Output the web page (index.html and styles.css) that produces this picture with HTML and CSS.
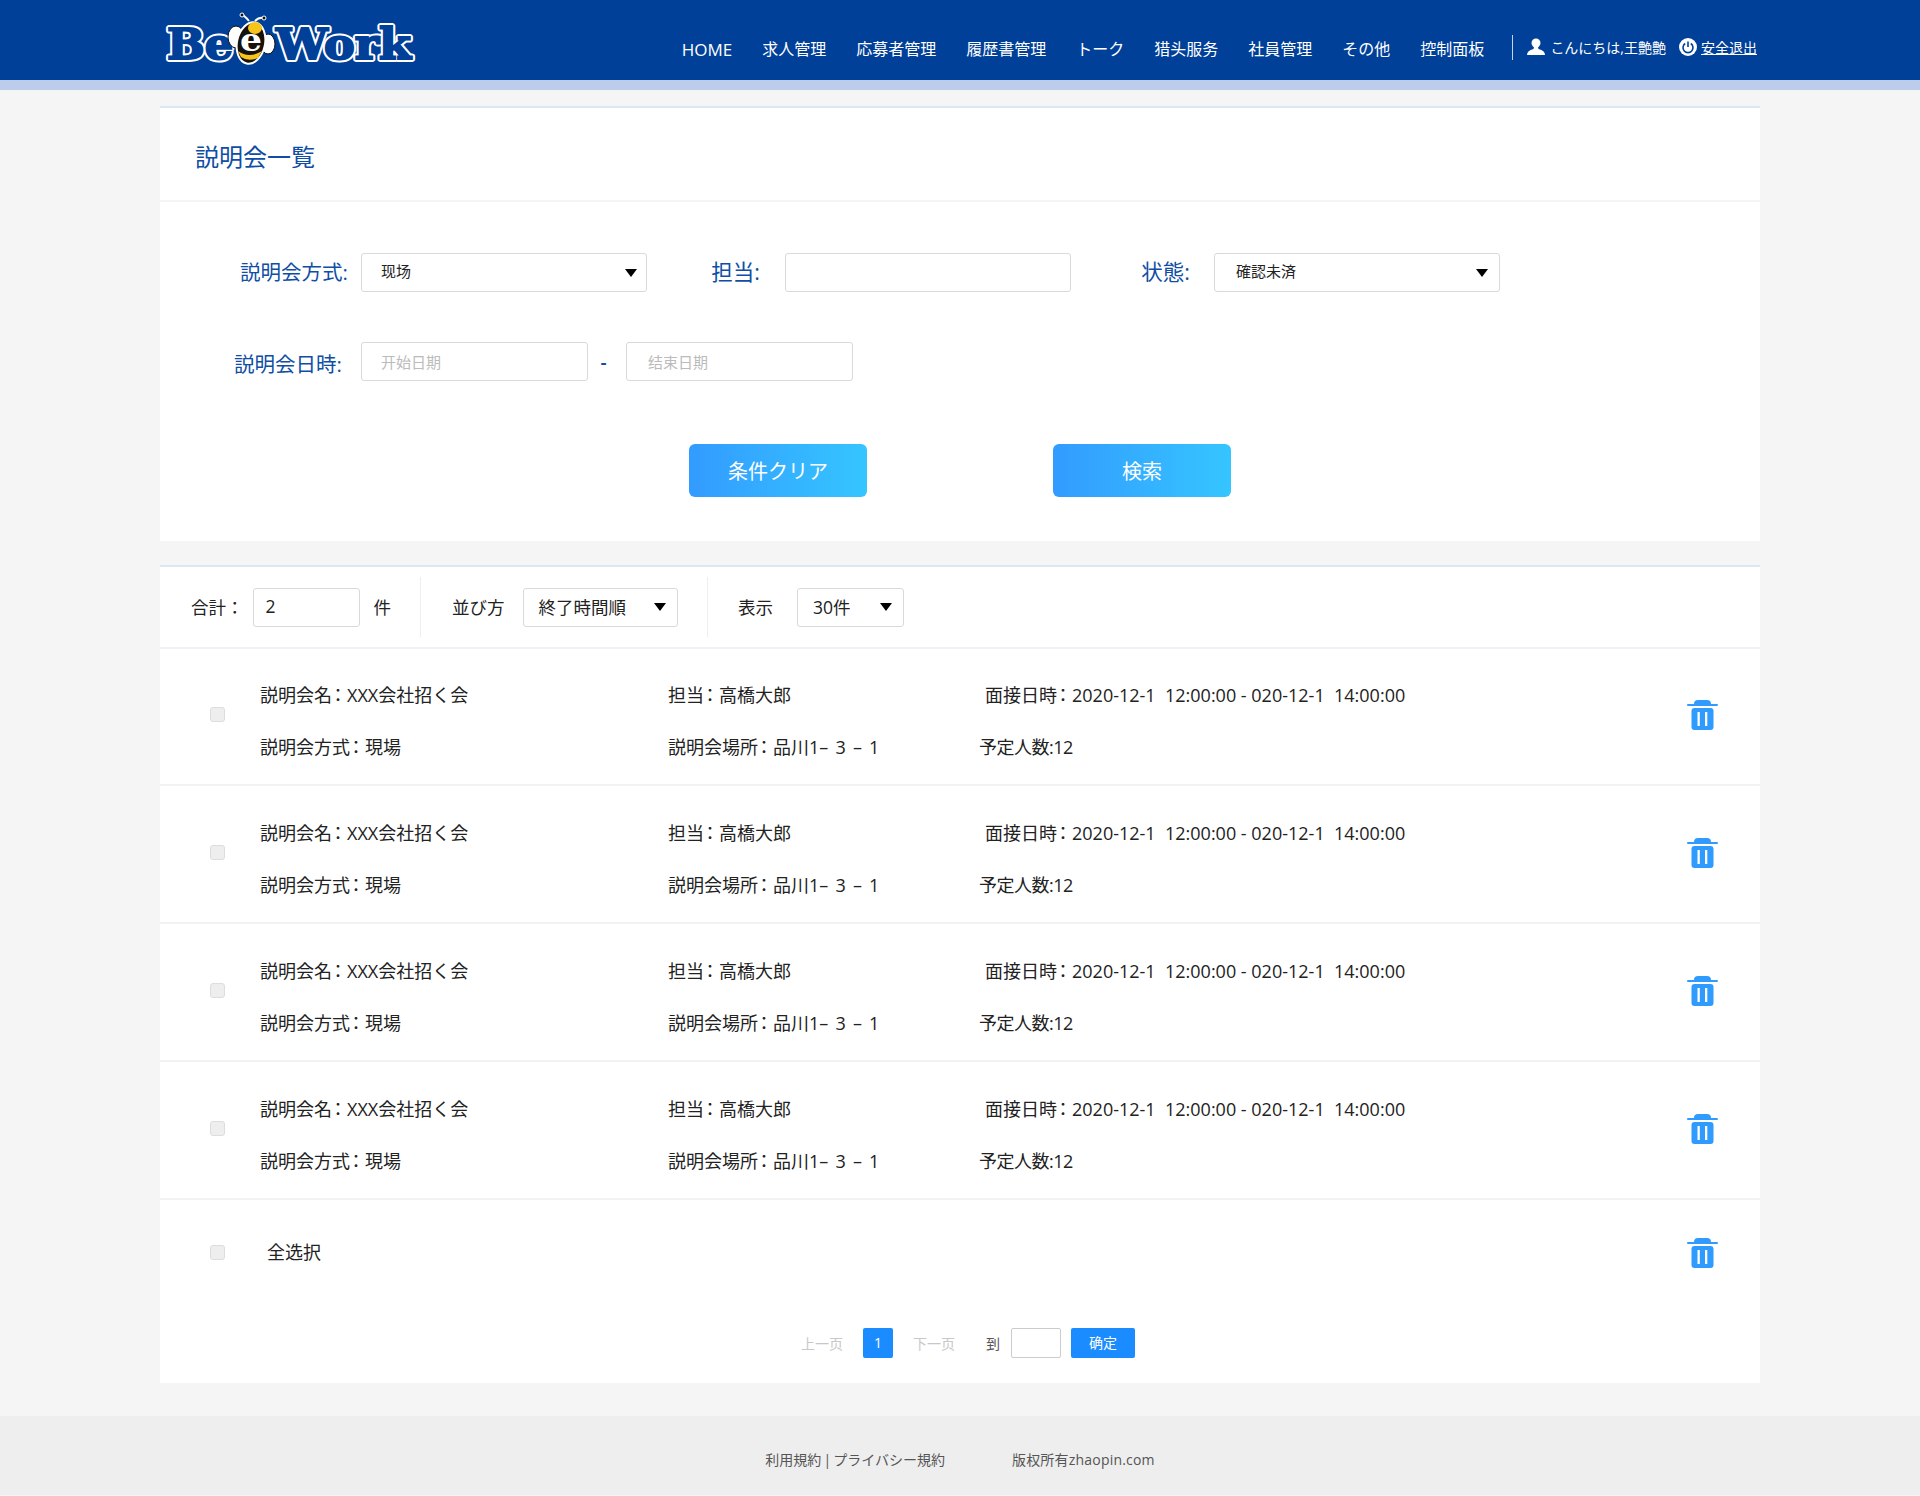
FILE: index.html
```html
<!DOCTYPE html>
<html lang="ja">
  <head>
    <meta charset="UTF-8" />
    <title>説明会一覧</title>
    <link rel="stylesheet" href="styles.css">
  </head>
  <body>
    <header class="top-bar">
      <svg class="logo" width="250" height="54" viewBox="0 0 250 54" role="img" aria-label="BeeWork">
        <text class="logo-line" x="2" y="48" textLength="66" lengthAdjust="spacingAndGlyphs">Be</text>
        <text class="logo-line" x="111" y="48" textLength="135" lengthAdjust="spacingAndGlyphs">Work</text>
        <text class="logo-fill" x="2" y="48" textLength="66" lengthAdjust="spacingAndGlyphs">Be</text>
        <text class="logo-fill" x="111" y="48" textLength="135" lengthAdjust="spacingAndGlyphs">Work</text>
        <path d="M84 10 Q80 5 77 4 M90 10 Q94 6 99 7" fill="none" stroke="#fff" stroke-width="2" />
        <circle cx="77" cy="4" r="2" fill="#111" stroke="#fff" />
        <circle cx="99" cy="7" r="2" fill="#111" stroke="#fff" />
        <ellipse cx="71" cy="26" rx="8" ry="11" fill="#fff" stroke="#111" />
        <ellipse cx="103" cy="33" rx="7" ry="10" fill="#fff" stroke="#111" />
        <ellipse cx="86" cy="32" rx="14" ry="21" fill="#17120c" stroke="#fff" stroke-width="2" transform="rotate(12 86 32)" />
        <ellipse cx="90" cy="17" rx="7" ry="6" fill="#f6c41b" />
        <path d="M73 40 Q84 48 97 40 L93 47 Q83 51 76 46 Z" fill="#f6c41b" />
        <text class="logo-bee" x="75" y="40" textLength="22" lengthAdjust="spacingAndGlyphs">e</text>
      </svg>
      <nav class="main-nav">
        <a href="#" class="nav-home">HOME</a>
        <a href="#">求人管理</a>
        <a href="#">応募者管理</a>
        <a href="#">履歴書管理</a>
        <a href="#">トーク</a>
        <a href="#" class="zh">猎头服务</a>
        <a href="#">社員管理</a>
        <a href="#">その他</a>
        <a href="#" class="zh">控制面板</a>
      </nav>
      <div class="user-box">
        <svg width="18" height="18" viewBox="0 0 18 18">
          <circle cx="9" cy="5" r="4.500" fill="#fff" />
          <path d="M7 9 L11 9 L11.500 11 Q18 12.500 18 17 L0 17 Q0 12.500 6.500 11 Z" fill="#fff" />
        </svg>
        <span class="user-name">こんにちは,王艶艶</span>
        <svg class="power" width="18" height="18" viewBox="0 0 18 18">
          <circle cx="9" cy="9" r="9" fill="#fff" />
          <path d="M6.200 5.500 A5 5 0 1 0 11.800 5.500" fill="none" stroke="#004098" stroke-width="1.600" />
          <path d="M9 3.500 V9" fill="none" stroke="#004098" stroke-width="1.600" />
        </svg>
        <a href="#" class="logout zh">安全退出</a>
      </div>
    </header>
    <div class="top-band"></div>

    <main class="page">
      <section class="card search-card">
        <h1 class="card-title">説明会一覧</h1>
        <form class="search-form">
          <div class="form-row form-row-top">
            <label class="label label-method">説明会方式:</label>
            <div class="field field-wide field-small field-method">
              <span class="zh">现场</span><i class="caret"></i>
            </div>
            <label class="label label-owner">担当:</label>
            <div class="field field-wide"></div>
            <label class="label label-state">状態:</label>
            <div class="field field-wide field-small field-state">
              <span>確認未済</span><i class="caret"></i>
            </div>
          </div>
          <div class="form-row">
            <label class="label label-date">説明会日時:</label>
            <div class="field field-date field-small placeholder zh">开始日期</div>
            <span class="dash">-</span>
            <div class="field field-date field-small field-end placeholder zh">结束日期</div>
          </div>
          <div class="form-buttons">
            <button type="button" class="grad-btn">条件クリア</button>
            <button type="button" class="grad-btn">検索</button>
          </div>
        </form>
      </section>

      <section class="card list-card">
        <div class="toolbar">
          <div class="tool-group tool-total">
            <span>合計：</span>
            <div class="field field-total">2</div>
            <span>件</span>
          </div>
          <div class="tool-group tool-sort">
            <span>並び方</span>
            <div class="field field-sort"><span>終了時間順</span><i class="caret"></i></div>
          </div>
          <div class="tool-group tool-show">
            <span>表示</span>
            <div class="field field-show"><span>30件</span><i class="caret"></i></div>
          </div>
        </div>

        <div class="item">
          <input type="checkbox" class="check" disabled />
          <div class="item-info zh">
            <span>説明会名<b class="sep">：</b>XXX会社招く会</span>
            <span>担当<b class="sep">：</b>高橋大郎</span>
            <span class="item-date">面接日時<b class="sep">：</b>2020-12-1&nbsp; 12:00:00 - 020-12-1&nbsp; 14:00:00</span>
            <span>説明会方式<b class="sep">：</b>現場</span>
            <span class="item-place">説明会場所<b class="sep">：</b>品川1– 3 – 1</span>
            <span class="item-count">予定人数:12</span>
          </div>
          <svg class="trash" width="31" height="30" viewBox="0 0 31 30">
            <path d="M7 4 Q7 0 11 0 H20 Q24 0 24 4 Z" fill="#2f9bff" />
            <rect x="0" y="4" width="31" height="2" rx="1" fill="#2f9bff" />
            <rect x="4.500" y="8" width="22" height="22" rx="3" fill="#2f9bff" />
            <rect x="10.500" y="12" width="2.300" height="14" fill="#fff" />
            <rect x="18" y="12" width="2.300" height="14" fill="#fff" />
          </svg>
        </div>
        <div class="item">
          <input type="checkbox" class="check" disabled />
          <div class="item-info zh">
            <span>説明会名<b class="sep">：</b>XXX会社招く会</span>
            <span>担当<b class="sep">：</b>高橋大郎</span>
            <span class="item-date">面接日時<b class="sep">：</b>2020-12-1&nbsp; 12:00:00 - 020-12-1&nbsp; 14:00:00</span>
            <span>説明会方式<b class="sep">：</b>現場</span>
            <span class="item-place">説明会場所<b class="sep">：</b>品川1– 3 – 1</span>
            <span class="item-count">予定人数:12</span>
          </div>
          <svg class="trash" width="31" height="30" viewBox="0 0 31 30">
            <path d="M7 4 Q7 0 11 0 H20 Q24 0 24 4 Z" fill="#2f9bff" />
            <rect x="0" y="4" width="31" height="2" rx="1" fill="#2f9bff" />
            <rect x="4.500" y="8" width="22" height="22" rx="3" fill="#2f9bff" />
            <rect x="10.500" y="12" width="2.300" height="14" fill="#fff" />
            <rect x="18" y="12" width="2.300" height="14" fill="#fff" />
          </svg>
        </div>
        <div class="item">
          <input type="checkbox" class="check" disabled />
          <div class="item-info zh">
            <span>説明会名<b class="sep">：</b>XXX会社招く会</span>
            <span>担当<b class="sep">：</b>高橋大郎</span>
            <span class="item-date">面接日時<b class="sep">：</b>2020-12-1&nbsp; 12:00:00 - 020-12-1&nbsp; 14:00:00</span>
            <span>説明会方式<b class="sep">：</b>現場</span>
            <span class="item-place">説明会場所<b class="sep">：</b>品川1– 3 – 1</span>
            <span class="item-count">予定人数:12</span>
          </div>
          <svg class="trash" width="31" height="30" viewBox="0 0 31 30">
            <path d="M7 4 Q7 0 11 0 H20 Q24 0 24 4 Z" fill="#2f9bff" />
            <rect x="0" y="4" width="31" height="2" rx="1" fill="#2f9bff" />
            <rect x="4.500" y="8" width="22" height="22" rx="3" fill="#2f9bff" />
            <rect x="10.500" y="12" width="2.300" height="14" fill="#fff" />
            <rect x="18" y="12" width="2.300" height="14" fill="#fff" />
          </svg>
        </div>
        <div class="item">
          <input type="checkbox" class="check" disabled />
          <div class="item-info zh">
            <span>説明会名<b class="sep">：</b>XXX会社招く会</span>
            <span>担当<b class="sep">：</b>高橋大郎</span>
            <span class="item-date">面接日時<b class="sep">：</b>2020-12-1&nbsp; 12:00:00 - 020-12-1&nbsp; 14:00:00</span>
            <span>説明会方式<b class="sep">：</b>現場</span>
            <span class="item-place">説明会場所<b class="sep">：</b>品川1– 3 – 1</span>
            <span class="item-count">予定人数:12</span>
          </div>
          <svg class="trash" width="31" height="30" viewBox="0 0 31 30">
            <path d="M7 4 Q7 0 11 0 H20 Q24 0 24 4 Z" fill="#2f9bff" />
            <rect x="0" y="4" width="31" height="2" rx="1" fill="#2f9bff" />
            <rect x="4.500" y="8" width="22" height="22" rx="3" fill="#2f9bff" />
            <rect x="10.500" y="12" width="2.300" height="14" fill="#fff" />
            <rect x="18" y="12" width="2.300" height="14" fill="#fff" />
          </svg>
        </div>

        <div class="select-all">
          <input type="checkbox" class="check" disabled />
          <span class="select-all-text zh">全选択</span>
          <svg class="trash" width="31" height="30" viewBox="0 0 31 30">
            <path d="M7 4 Q7 0 11 0 H20 Q24 0 24 4 Z" fill="#2f9bff" />
            <rect x="0" y="4" width="31" height="2" rx="1" fill="#2f9bff" />
            <rect x="4.500" y="8" width="22" height="22" rx="3" fill="#2f9bff" />
            <rect x="10.500" y="12" width="2.300" height="14" fill="#fff" />
            <rect x="18" y="12" width="2.300" height="14" fill="#fff" />
          </svg>
        </div>

        <div class="pager zh">
          <span class="pager-off">上一页</span>
          <span class="pager-num">1</span>
          <span class="pager-off">下一页</span>
          <span class="pager-to">到</span>
          <span class="pager-input"></span>
          <span class="pager-ok">确定</span>
        </div>
      </section>
    </main>

    <footer class="site-footer">
      <span class="footer-terms">利用規約 | プライバシー規約</span>
      <span class="footer-copy zh">版权所有zhaopin.com</span>
    </footer>
  </body>
</html>
```

FILE: styles.css
```css
* {
  box-sizing: border-box;
}
body {
  font-family: "Open Sans", "Noto Sans CJK JP", sans-serif;
  background: #f5f5f5;
  color: #222;
  margin: 0;
  padding: 0;
  min-height: 1496px;
}
.zh {
  font-family: "Open Sans", "Noto Sans CJK SC", sans-serif;
}

/* header */
.top-bar {
  display: flex;
  align-items: center;
  height: 80px;
  padding: 18px 163px 0 165px;
  background: #004098;
  color: #fff;
}
.logo {
  flex: none;
  margin-top: -22px;
  overflow: visible;
}
.logo-line,
.logo-fill {
  font-family: "DejaVu Serif", serif;
  font-weight: 700;
  font-size: 43px;
}
.logo-line {
  fill: #fff;
  stroke: #fff;
  stroke-width: 6px;
  stroke-linejoin: round;
}
.logo-fill {
  fill: #004098;
  stroke: #004098;
  stroke-width: 2px;
}
.logo-bee {
  font-family: "DejaVu Serif", serif;
  font-weight: 700;
  font-size: 32px;
  fill: #fff;
}
.main-nav {
  display: flex;
  align-items: center;
  gap: 30px;
  margin-left: auto;
  margin-top: -2px;
  font-size: 16px;
}
.main-nav a {
  color: #fff;
  text-decoration: none;
}
.main-nav .nav-home {
  padding-top: 2px;
  font-size: 17px;
}
.user-box {
  display: flex;
  align-items: center;
  height: 25px;
  margin-left: 28px;
  padding-left: 14px;
  border-left: 1px solid #c6d4e8;
  font-size: 14px;
  margin-top: -4px;
}
.user-name {
  margin-left: 5px;
}
.power {
  margin-left: 13px;
}
.logout {
  margin-left: 4px;
  color: #fff;
}
.top-band {
  height: 10px;
  background: #bbcdea;
}

/* cards */
.page {
  width: 1600px;
  margin: 16px auto 33px auto;
}
.card {
  background: #fff;
  border-top: 2px solid #dce6f4;
}
.card-title {
  margin: 0;
  height: 94px;
  padding-left: 35px;
  border-bottom: 2px solid #f5f5f5;
  color: #0f4ea4;
  font-size: 24px;
  font-weight: 400;
  line-height: 97px;
}
.search-card {
  height: 435px;
}
.search-form {
  padding-top: 51px;
}
.form-row {
  display: flex;
  align-items: center;
  margin-bottom: 50px;
}
.label {
  flex: none;
  color: #0f4ea4;
  font-size: 20.500px;
  text-align: right;
}
.form-row-top .label {
  margin-bottom: 4px;
}
.label-method {
  width: 188px;
  margin-right: 13px;
}
.label-owner {
  width: 113px;
  margin-right: 25px;
  font-size: 21.500px;
}
.label-state {
  width: 119px;
  margin-right: 24px;
  font-size: 21.500px;
}
.label-date {
  width: 182px;
  margin-right: 19px;
  padding-top: 2px;
}
.field {
  display: flex;
  flex: none;
  align-items: center;
  justify-content: space-between;
  height: 39px;
  background: #fff;
  border: 1px solid #d9d9d9;
  border-radius: 3px;
  color: #222;
  font-size: 17.500px;
}
.field-small {
  padding: 0 16px 0 19px;
  font-size: 15px;
}
.field-method {
  padding: 0 9px 4px 19px;
}
.field-method .caret {
  margin-top: 4px;
}
.field-state {
  padding: 0 11px 4px 21px;
}
.field-state .caret {
  margin-top: 4px;
}
.field-end {
  padding-left: 21px;
}
.field-wide {
  width: 286px;
}
.field-date {
  width: 227px;
}
.placeholder {
  color: #bbb;
}
.dash {
  width: 38px;
  padding-right: 7px;
  color: #0f4ea4;
  font-size: 19px;
  font-weight: 600;
  text-align: center;
}
.caret {
  width: 0;
  height: 0;
  border-left: 6.500px solid transparent;
  border-right: 6.500px solid transparent;
  border-top: 8px solid #000;
}
.form-buttons {
  display: flex;
  justify-content: center;
  gap: 186px;
  margin-top: 63px;
}
.grad-btn {
  width: 178px;
  height: 53px;
  border: 0;
  border-radius: 6px;
  background: linear-gradient(to right, #339bff, #35c5ff);
  color: #fff;
  font-family: inherit;
  font-size: 20px;
}

/* list */
.list-card {
  height: 818px;
  margin-top: 24px;
}
.toolbar {
  display: flex;
  align-items: center;
  height: 82px;
  border-bottom: 2px solid #eef1f6;
  font-size: 17.500px;
}
.tool-group {
  display: flex;
  align-items: center;
  height: 60px;
  border-right: 1px solid #eeeeee;
}
.tool-group > span,
.toolbar .field span {
  padding-bottom: 2px;
}
.tool-total {
  width: 261px;
  padding-left: 31px;
}
.tool-total .field {
  margin: 0 14px 0 9px;
}
.field-total {
  width: 107px;
  padding-left: 12px;
  padding-bottom: 2px;
}
.tool-sort {
  width: 287px;
  padding-left: 31px;
}
.field-sort {
  width: 155px;
  margin-left: 18px;
  padding: 0 11px 0 15px;
}
.tool-show {
  padding-left: 30px;
  border-right: 0;
}
.field-show {
  width: 107px;
  margin-left: 24px;
  padding: 0 11px 0 15px;
}
.item {
  display: flex;
  align-items: center;
  height: 138px;
  padding: 0 42px 0 50px;
  border-bottom: 2px solid #f2f2f2;
}
.toolbar + .item {
  height: 137px;
}
.check {
  flex: none;
  appearance: none;
  width: 15px;
  height: 15px;
  margin: 0 0 4px 0;
  background: #eeeeee;
  border: 1px solid #dddddd;
  border-radius: 3px;
}
.item-info {
  display: grid;
  flex: 1;
  grid-template-columns: 408px 311px 1fr;
  row-gap: 28px;
  margin-left: 35px;
  margin-top: 9px;
  font-size: 18px;
  line-height: 24px;
}
.item-date {
  margin-left: 6px;
}
.item-place {
  word-spacing: 2.500px;
}
.item-count {
  letter-spacing: -0.500px;
}
.sep {
  margin-left: -3px;
  font-weight: 400;
}
.trash {
  flex: none;
  margin-bottom: 3px;
}
.select-all {
  display: flex;
  align-items: center;
  height: 87px;
  padding: 18px 42px 0 50px;
  font-size: 18px;
}
.select-all-text {
  flex: 1;
  margin-left: 42px;
  margin-bottom: 4px;
}
.select-all .check,
.select-all .trash {
  margin-bottom: 0;
}
.pager {
  display: flex;
  align-items: center;
  height: 30px;
  margin-top: 41px;
  padding-left: 641px;
  font-size: 14px;
}
.pager-off {
  color: #c8c8c8;
}
.pager-num {
  width: 30px;
  height: 30px;
  margin: 0 20px;
  background: #1a8cff;
  border-radius: 2px;
  color: #fff;
  line-height: 30px;
  text-align: center;
}
.pager-to {
  margin-left: 31px;
  color: #555;
}
.pager-input {
  width: 50px;
  height: 30px;
  margin-left: 11px;
  border: 1px solid #cccccc;
  border-radius: 2px;
}
.pager-ok {
  width: 64px;
  height: 30px;
  margin-left: 10px;
  background: #1a8cff;
  border-radius: 2px;
  color: #fff;
  line-height: 30px;
  text-align: center;
}

/* footer */
.site-footer {
  display: flex;
  justify-content: center;
  gap: 67px;
  align-items: center;
  height: 79px;
  padding-top: 6px;
  background: #eeeeee;
  color: #555;
  font-size: 14px;
}
.footer-terms {
  word-spacing: -1.500px;
}
.footer-copy {
  letter-spacing: 0.200px;
}
```
